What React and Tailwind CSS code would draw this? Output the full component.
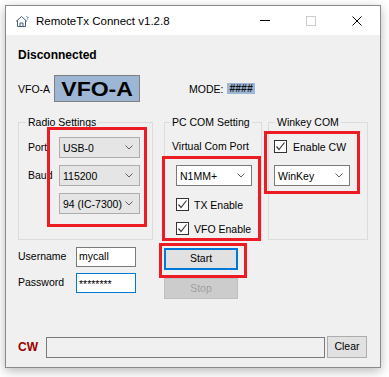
import React from 'react';

const Chevron = () => (
    <svg width="8" height="5" viewBox="0 0 8 5" className="shrink-0">
        <polyline points="0.5,0.5 4,4 7.5,0.5" fill="none" stroke="#606060" strokeWidth="1" />
    </svg>
);

const Combo = ({ value, white, width }) => (
    <div
        className={`flex items-center justify-between h-[21px] pl-[3px] pr-[6px] border ${
            white ? 'bg-white border-[#7a7a7a]' : 'bg-[#e5e5e5] border-[#adadad]'
        } ${width}`}
    >
        <span className="leading-[12px]">{value}</span>
        <Chevron />
    </div>
);

const Check = ({ label, gap }) => (
    <div className="flex items-center h-[13px]">
        <div className="w-[13px] h-[13px] border border-[#333333] bg-white flex items-center justify-center">
            <svg width="11" height="11" viewBox="0 0 11 11">
                <polyline points="1.5,5.5 4,8.5 9.5,1.5" fill="none" stroke="#3c3c3c" strokeWidth="1.2" />
            </svg>
        </div>
        <span className={`leading-[12px] ${gap}`}>{label}</span>
    </div>
);

const Group = ({ title, legendMl, width, children }) => (
    <fieldset className={`border border-[#dcdcdc] h-[124px] ${width}`}>
        <legend className={`px-[2px] leading-[12px] ${legendMl}`}>{title}</legend>
        {children}
    </fieldset>
);

const RedBox = ({ className }) => (
    <div className={`absolute border-[3px] border-[#ed1c24] pointer-events-none ${className}`} />
);

export default function App() {
    return (
        <div className="relative w-[389px] h-[377px] bg-white overflow-hidden font-['Liberation_Sans',Arial,sans-serif] text-[10.5px] text-black">
            <div className="ml-[5px] mt-[5px] w-[376px] h-[363px] border border-[#8a8a8a] flex flex-col shadow-[0_3px_10px_rgba(0,0,0,0.28)]">
                {/* title bar */}
                <div className="h-[29px] bg-white flex items-center">
                    <svg width="15" height="12" viewBox="0 0 15 12" className="ml-[9px]">
                        <path d="M1 6.5 L6.5 1.5 L12 6.5 M2.5 5.5 V11.5 H10.5 V5.5 M5 11.5 V8 H8 V11.5" fill="none" stroke="#4b5d7c" strokeWidth="1" />
                        <path d="M11.5 1 L12.2 2.3 L13.5 2.5 L12.4 3.3 L12.7 4.5" fill="none" stroke="#5b8fd0" strokeWidth="0.9" />
                    </svg>
                    <span className="ml-[6px] text-[11.5px] leading-[14px]">RemoteTx Connect v1.2.8</span>
                    <div className="ml-auto flex h-full">
                        <div className="w-[46px] flex items-center justify-center">
                            <div className="w-[10px] h-px bg-black" />
                        </div>
                        <div className="w-[46px] flex items-center justify-center">
                            <div className="w-[10px] h-[10px] border border-[#cccccc]" />
                        </div>
                        <div className="w-[46px] flex items-center justify-center">
                            <svg width="10" height="10" viewBox="0 0 10 10">
                                <path d="M0.5 0.5 L9.5 9.5 M9.5 0.5 L0.5 9.5" stroke="#000" strokeWidth="1" />
                            </svg>
                        </div>
                    </div>
                </div>

                {/* client area */}
                <div className="flex-1 bg-[#f0f0f0] pl-[12px] flex flex-col">
                    <div className="mt-[13px] text-[12px] font-bold leading-[14px]">Disconnected</div>

                    <div className="mt-[13px] h-[27px] flex items-center">
                        <span className="w-[36px] leading-[12px]">VFO-A</span>
                        <div className="w-[86px] h-[27px] bg-[#9db6d3] border border-[#7f7f7f] flex items-center justify-center">
                            <span className="inline-block text-[20px] font-bold leading-[24px] scale-x-[1.15]">VFO-A</span>
                        </div>
                        <span className="ml-[49px] leading-[12px]">MODE:</span>
                        <span className="ml-[4px] h-[11px] px-[2px] bg-[#9db6d3] font-bold leading-[11px] text-[#111111]">####</span>
                    </div>

                    <div className="mt-[14px] flex">
                        <Group title="Radio Settings" legendMl="ml-[7px]" width="w-[135px]">
                            <div className="pl-[9px] pt-[9px] flex flex-col gap-[7px]">
                                <div className="flex items-center">
                                    <span className="w-[31px]">Port</span>
                                    <Combo value="USB-0" width="w-[81px]" />
                                </div>
                                <div className="flex items-center">
                                    <span className="w-[31px]">Baud</span>
                                    <Combo value="115200" width="w-[81px]" />
                                </div>
                                <div className="flex items-center">
                                    <span className="w-[31px]" />
                                    <Combo value="94 (IC-7300)" width="w-[81px]" />
                                </div>
                            </div>
                        </Group>

                        <div className="ml-[11px]">
                            <Group title="PC COM Setting" legendMl="ml-[5px]" width="w-[98px]">
                                <div className="pl-[7px] pt-[12px] flex flex-col">
                                    <span className="leading-[12px]">Virtual Com Port</span>
                                    <div className="mt-[13px] ml-[4px] flex flex-col">
                                        <Combo value="N1MM+" white width="w-[76px]" />
                                        <div className="mt-[12px]">
                                            <Check label="TX Enable" gap="ml-[5px]" />
                                        </div>
                                        <div className="mt-[11px]">
                                            <Check label="VFO Enable" gap="ml-[5px]" />
                                        </div>
                                    </div>
                                </div>
                            </Group>
                        </div>

                        <div className="ml-[6px]">
                            <Group title="Winkey COM" legendMl="ml-[6px]" width="w-[100px]">
                                <div className="pl-[5px] pt-[12px] flex flex-col">
                                    <Check label="Enable CW" gap="ml-[6px]" />
                                    <div className="mt-[12px]">
                                        <Combo value="WinKey" white width="w-[76px]" />
                                    </div>
                                </div>
                            </Group>
                        </div>
                    </div>

                    <div className="mt-[7px] flex">
                        <div className="w-[146px] flex flex-col gap-[6px]">
                            <div className="flex items-center h-[20px]">
                                <span className="w-[58px]">Username</span>
                                <div className="w-[60px] h-[20px] bg-white border border-[#7a7a7a] pl-[2px] flex items-center">mycall</div>
                            </div>
                            <div className="flex items-center h-[20px]">
                                <span className="w-[58px]">Password</span>
                                <div className="w-[60px] h-[20px] bg-white border border-[#0078d7] pl-[2px] flex items-center pt-[3px]">********</div>
                            </div>
                        </div>
                        <div className="mt-[1px] flex flex-col gap-[8px]">
                            <div className="w-[74px] h-[22px] bg-[#e1e1e1] border-2 border-[#0078d7] flex items-center justify-center">Start</div>
                            <div className="w-[74px] h-[21px] bg-[#cccccc] border border-[#bfbfbf] text-[#a0a0a0] flex items-center justify-center">Stop</div>
                        </div>
                    </div>

                    <div className="mt-auto mb-[9px] flex items-center h-[22px]">
                        <span className="w-[28px] text-[12px] font-bold text-[#990000]">CW</span>
                        <div className="w-[279px] h-[21px] bg-[#f0f0f0] border border-[#7a7a7a]" />
                        <div className="ml-[2px] w-[40px] h-[22px] bg-[#e1e1e1] border border-[#adadad] flex items-center justify-center">Clear</div>
                    </div>
                </div>
            </div>

            <RedBox className="left-[47px] top-[127px] w-[100px] h-[100px]" />
            <RedBox className="left-[162px] top-[156px] w-[99px] h-[85px]" />
            <RedBox className="left-[264px] top-[131px] w-[96px] h-[63px]" />
            <RedBox className="left-[159px] top-[243px] w-[88px] h-[35px]" />
        </div>
    );
}
